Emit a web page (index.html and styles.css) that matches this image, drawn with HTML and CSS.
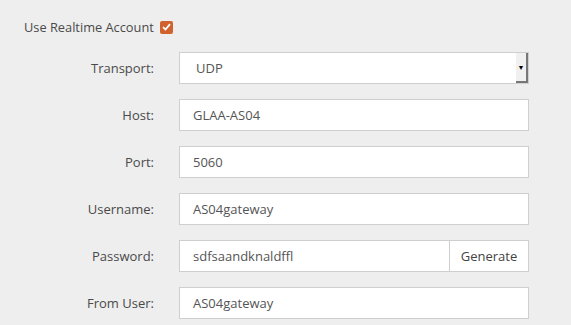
FILE: index.html
```html
<!DOCTYPE html>
<html lang="en">
<head>
  <meta charset="UTF-8" />
  <title>Realtime Account</title>
  <link rel="stylesheet" href="styles.css">
</head>
<body>
  <div class="form">
    <div class="realtime">
      <span>Use Realtime Account</span>
      <span class="checkbox">
        <svg width="9" height="8" viewBox="0 0 9 8"><path d="M1 4.2 L3.5 6.5 L8 1.2" fill="none" stroke="#fff" stroke-width="1.8"/></svg>
      </span>
    </div>
    <div class="row">
      <label>Transport:</label>
      <div class="select">
        <span class="select-value">UDP</span>
        <span class="select-arrow">&#9660;</span>
      </div>
    </div>
    <div class="row">
      <label>Host:</label>
      <div class="field">GLAA-AS04</div>
    </div>
    <div class="row">
      <label>Port:</label>
      <div class="field">5060</div>
    </div>
    <div class="row">
      <label>Username:</label>
      <div class="field">AS04gateway</div>
    </div>
    <div class="row">
      <label>Password:</label>
      <div class="group">
        <div class="field">sdfsaandknaldffl</div>
        <button class="btn">Generate</button>
      </div>
    </div>
    <div class="row">
      <label>From User:</label>
      <div class="field">AS04gateway</div>
    </div>
  </div>
</body>
</html>
```

FILE: styles.css
```css
body {
  margin: 0;
  background: #eeeeee;
  font-family: 'Open Sans', sans-serif;
  font-size: 13px;
  color: #4a4a4a;
}

.form {
  padding: 18px 0 0 0;
}

.realtime {
  display: flex;
  align-items: center;
  gap: 6px;
  padding-left: 24px;
  height: 18px;
  margin-bottom: 16px;
  font-size: 12.8px;
}

.checkbox {
  width: 13px;
  height: 13px;
  border-radius: 2px;
  background: #d2622d;
  display: flex;
  align-items: center;
  justify-content: center;
}

.row {
  display: grid;
  grid-template-columns: 154px 350px;
  column-gap: 25px;
  align-items: center;
  margin-bottom: 15px;
}

.row label {
  text-align: right;
}

.field, .select {
  box-sizing: border-box;
  height: 32px;
  background: #fff;
  border: 1px solid #cfcfcf;
  display: flex;
  align-items: center;
  padding-left: 13px;
  color: #555;
}

.select {
  padding-left: 16px;
  justify-content: space-between;
  padding-right: 0;
}

.select-arrow {
  box-sizing: border-box;
  width: 12px;
  height: 30px;
  background: #f0f0f0;
  border-right: 2px solid #777;
  border-bottom: 2px solid #777;
  font-size: 7px;
  color: #000;
  display: flex;
  align-items: center;
  justify-content: center;
}

.group {
  display: flex;
}

.group .field {
  flex: 1;
}

.btn {
  box-sizing: border-box;
  width: 80px;
  height: 32px;
  background: #fff;
  border: 1px solid #cfcfcf;
  font-family: inherit;
  font-size: 13px;
  color: #444;
  padding: 0;
  margin-left: -1px;
}
```
